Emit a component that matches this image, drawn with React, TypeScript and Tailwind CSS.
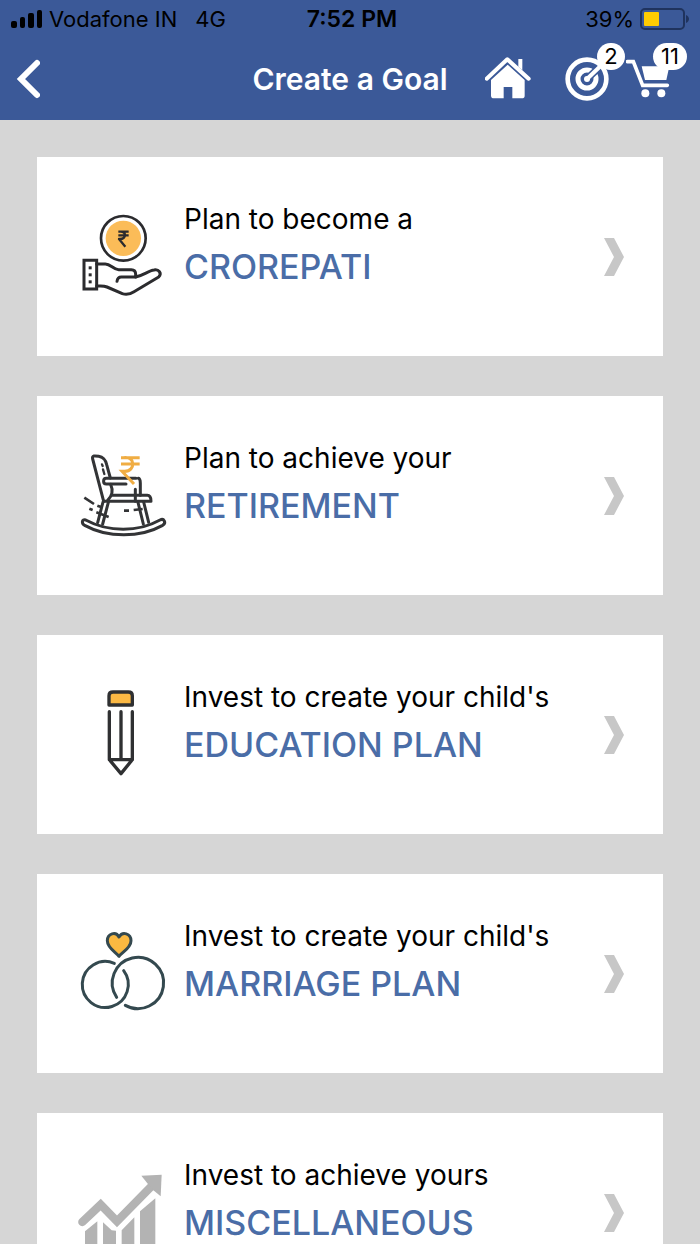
import React from "react";

type Goal = {
  intro: string;
  name: string;
  icon: React.ReactNode;
};

function HandCoinIcon() {
  return (
    <svg
      className="w-[110px] h-[110px]"
      viewBox="0 3 330 330"
      fill="none"
      stroke="#2b2b2e"
      strokeWidth="9"
      strokeLinecap="round"
      strokeLinejoin="round"
      aria-hidden="true"
    >
      <circle cx="160" cy="115" r="67" strokeWidth="8" />
      <circle cx="160" cy="115" r="53" fill="#fbbc58" stroke="none" />
      <path
        d="M145 95H176M145 106H176M150 95C170 93 170 117 150 117H147L166 140"
        strokeWidth="7"
        strokeLinecap="butt"
      />
      <path d="M42 181H80V267H42Z" strokeLinejoin="miter" />
      <path d="M80 192H106C122 192 130 209 146 209H184C193 209 197 215 197 223V231H154C145 231 142 236 141 244" />
      <path d="M197 231C220 226 236 212 252 210C266 207 277 220 266 231L192 275C180 283 170 285 157 281L111 261C100 256 91 258 80 258" />
      <g fill="#2b2b2e" stroke="none">
        <rect x="56" y="199" width="9" height="9" />
        <rect x="56" y="220" width="9" height="9" />
        <rect x="56" y="241" width="9" height="9" />
      </g>
    </svg>
  );
}

function RockingChairIcon() {
  return (
    <svg
      className="w-[110px] h-[110px]"
      viewBox="0 0 330 330"
      fill="none"
      stroke="#333436"
      strokeWidth="9"
      strokeLinecap="round"
      strokeLinejoin="round"
      aria-hidden="true"
    >
      <path d="M101 184L68 57C65 46 75 47 86 49C103 52 107 62 110 74L121 114" />
      <path d="M96 73L98 78M99 88L103 102" strokeWidth="7" />
      <path d="M198 115H109C98 115 98 132 109 132H168" />
      <path d="M205 115C211 116 211 122 211 130V166M196 148V184" />
      <path d="M122 133C130 151 125 169 113 181" />
      <path d="M126 166H232C241 166 243 174 243 184H102" />
      <path d="M99 186L83 248M115 187L98 252M204 187L220 252M221 186L236 247" />
      <path d="M47 240C35 235 34 252 44 256C113 294 210 294 278 256C290 248 282 234 270 240C204 277 116 277 47 240Z" />
      <path
        d="M43 173L72 192M82 197L96 202M58 206L68 210M79 217L116 231M162 212H177M191 210L218 207"
        strokeWidth="8"
        strokeLinecap="butt"
      />
      <path
        d="M153 53H209M153 72H209M160 53C196 46 198 94 164 94H156L192 132"
        stroke="#f0ad43"
        strokeWidth="9"
        strokeLinecap="butt"
        strokeLinejoin="miter"
      />
    </svg>
  );
}

function PencilIcon() {
  return (
    <svg
      className="w-[110px] h-[110px]"
      viewBox="0 -3 330 330"
      fill="none"
      stroke="#2f3032"
      strokeWidth="10"
      strokeLinecap="round"
      strokeLinejoin="round"
      aria-hidden="true"
    >
      <path d="M117 75V47C117 40 122 36 129 36H175C182 36 187 40 187 47V75Z" fill="#fcb944" />
      <path d="M118 95V239L153 281L187 239V95M153 95V237M118 239H187" />
    </svg>
  );
}

function RingsIcon() {
  return (
    <svg
      className="w-[110px] h-[110px]"
      viewBox="0 -6 330 330"
      fill="none"
      stroke="#34494f"
      strokeWidth="9"
      strokeLinecap="round"
      strokeLinejoin="round"
      aria-hidden="true"
    >
      <path
        d="M147 109C139 97 112 84 112 62C112 40 138 33 147 51C157 33 183 40 183 62C183 84 156 97 147 109Z"
        fill="#fbb941"
      />
      <path d="M133 130A69 69 0 1 0 161 152" />
      <path d="M140 232A77 77 0 1 1 166 256" />
    </svg>
  );
}

function GrowthIcon() {
  return (
    <svg
      className="w-[110px] h-[110px]"
      viewBox="0 -9 330 330"
      fill="#b3b3b3"
      aria-hidden="true"
    >
      <path d="M37 186L92 134L141 184L247 76" fill="none" stroke="#b3b3b3" strokeWidth="25" strokeLinecap="round" />
      <path d="M214 47L275 44L272 109L250 91L232 70Z" />
      <path d="M45 214L82 184V310H45ZM99 187L125 211L138 212V310H99ZM155 211L193 172V310H155ZM210 154L256 115V310H210Z" />
    </svg>
  );
}

function HomeIcon() {
  return (
    <svg className="w-[46px] h-11" viewBox="45 51 138 132" fill="white" aria-hidden="true">
      <path d="M50 116L112 58L176 116" fill="none" stroke="white" strokeWidth="12" strokeLinecap="round" strokeLinejoin="round" />
      <path d="M145 57H157V91L145 80Z" />
      <path d="M113 74L164 120V167C164 173 161 175 155 175H127V141H101V175H72C66 175 63 172 63 167V120Z" />
    </svg>
  );
}

function TargetIcon() {
  return (
    <svg className="w-11 h-11" viewBox="285 51 132 132" fill="none" stroke="white" aria-hidden="true">
      <circle cx="351" cy="117" r="58" strokeWidth="14" />
      <circle cx="351" cy="117" r="27" strokeWidth="15" />
      <path d="M355 113L384 86" stroke="#3b5998" strokeWidth="22" />
      <circle cx="351" cy="117" r="9" fill="white" stroke="none" />
      <path d="M351 117L398 72" strokeWidth="12" />
    </svg>
  );
}

function CartIcon() {
  return (
    <svg className="w-11 h-11" viewBox="468 51 132 132" fill="white" aria-hidden="true">
      <path d="M472 65H490L518 136H592" fill="none" stroke="white" strokeWidth="11" strokeLinecap="round" />
      <path d="M515 79H598L589 120H525Z" />
      <circle cx="526" cy="160" r="12" />
      <circle cx="574" cy="160" r="12" />
    </svg>
  );
}

const goals: Goal[] = [
  { intro: "Plan to become a", name: "CROREPATI", icon: <HandCoinIcon /> },
  { intro: "Plan to achieve your", name: "RETIREMENT", icon: <RockingChairIcon /> },
  { intro: "Invest to create your child's", name: "EDUCATION PLAN", icon: <PencilIcon /> },
  { intro: "Invest to create your child's", name: "MARRIAGE PLAN", icon: <RingsIcon /> },
  { intro: "Invest to achieve yours", name: "MISCELLANEOUS", icon: <GrowthIcon /> },
];

function StatusBar() {
  return (
    <div className="grid grid-cols-[1fr_auto_1fr] items-center h-[38px] pl-[14px] pr-[10px] text-[22px] text-black">
      <div className="-ml-[3px] flex items-center">
        <svg className="w-8 h-[18px] mr-1.5" viewBox="0 0 32 18" aria-hidden="true">
          <rect x="0" y="11" width="6" height="7" rx="2" />
          <rect x="9" y="7" width="5" height="11" rx="2" />
          <rect x="17" y="3" width="6" height="15" rx="2" />
          <rect x="26" y="0" width="5" height="18" rx="2" />
        </svg>
        <span>Vodafone IN</span>
        <span className="ml-[18px]">4G</span>
      </div>
      <span className="text-[23px] font-semibold">7:52 PM</span>
      <div className="flex items-center justify-end">
        <span>39%</span>
        <svg className="w-[50px] h-[22px] ml-1.5" viewBox="0 0 50 22" aria-hidden="true">
          <rect x="1" y="1" width="43" height="20" rx="4" fill="none" stroke="#1f335e" strokeWidth="2" />
          <rect x="4" y="4" width="15" height="14" rx="1" fill="#ffcc02" />
          <path d="M46 7C50 9 50 13 46 15Z" fill="#1f335e" />
        </svg>
      </div>
    </div>
  );
}

function NavBar() {
  return (
    <div className="grid grid-cols-[1fr_auto_1fr] items-center h-[82px] pl-4 pr-[30px]">
      <button type="button" aria-label="Back" className="justify-self-start">
        <svg className="w-6 h-10" viewBox="0 0 24 40" fill="none" stroke="white" strokeWidth="6" strokeLinecap="round" aria-hidden="true">
          <path d="M21 4L5 20L21 36" />
        </svg>
      </button>
      <h1 className="-mr-3.5 text-[30px] font-semibold text-white">Create a Goal</h1>
      <div className="flex items-center justify-end">
        <button type="button" aria-label="Home">
          <HomeIcon />
        </button>
        <button type="button" aria-label="Goals" className="relative ml-[34px]">
          <TargetIcon />
          <span className="absolute -top-3.5 left-8 w-7 h-[27px] rounded-full bg-white text-black text-[22px] leading-[27px] text-center">
            2
          </span>
        </button>
        <button type="button" aria-label="Cart" className="relative ml-[17px]">
          <CartIcon />
          <span className="absolute -top-3.5 left-[27px] w-[34px] h-[27px] rounded-full bg-white text-black text-[22px] leading-[27px] text-center">
            11
          </span>
        </button>
      </div>
    </div>
  );
}

function GoalCard({ intro, name, icon }: Goal) {
  return (
    <a href="#" className="flex shrink-0 h-[199px] pl-[33px] pr-[39px] bg-white">
      <div className="shrink-0 mt-11">{icon}</div>
      <div className="flex-1 pl-1 pt-[38px] leading-[48px] whitespace-nowrap">
        <p className="text-[28px] text-black">{intro}</p>
        <h2 className="text-[34px] font-medium text-[#4a6da7]">{name}</h2>
      </div>
      <svg className="self-center shrink-0 w-5 h-[38px]" viewBox="0 0 20 38" fill="#c7c7c7" aria-hidden="true">
        <path d="M0 0H10L20 19L10 38H0L10 19Z" />
      </svg>
    </a>
  );
}

export default function App() {
  return (
    <div className="flex flex-col h-screen overflow-hidden bg-[#d6d6d6] font-['Inter','Liberation_Sans',sans-serif]">
      <header className="shrink-0 bg-[#3b5998]">
        <StatusBar />
        <NavBar />
      </header>
      <main className="flex flex-col flex-1 gap-10 px-[37px] pt-[37px] overflow-hidden">
        {goals.map((goal) => (
          <GoalCard key={goal.name} {...goal} />
        ))}
      </main>
    </div>
  );
}
